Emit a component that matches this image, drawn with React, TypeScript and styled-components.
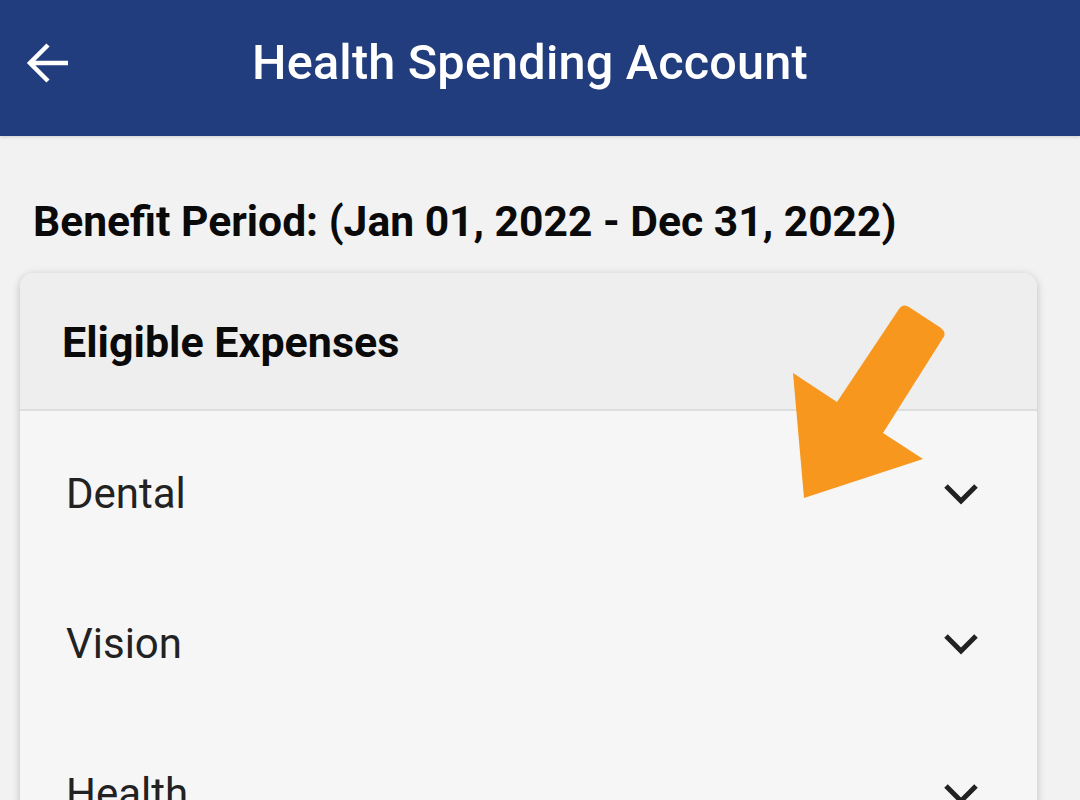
import React from "react";
import styled, { createGlobalStyle } from "styled-components";

const GlobalStyle = createGlobalStyle`
  html, body {
    margin: 0;
    padding: 0;
    background: #f2f2f2;
    overflow: hidden;
    font-family: Roboto, "Noto Sans", Arial, sans-serif;
  }
`;

const Page = styled.div`
  position: relative;
  width: 1080px;
  min-height: 800px;
`;

const TopBar = styled.header`
  height: 136px;
  background: #223d7d;
  display: flex;
  align-items: center;
  padding: 0 0 10px 24px;
  box-sizing: border-box;
  box-shadow: 0 1px 3px rgba(0, 0, 0, 0.15);
`;

const BackButton = styled.button`
  width: 48px;
  height: 48px;
  padding: 0;
  border: none;
  background: transparent;
  display: flex;
  align-items: center;
  justify-content: center;
  cursor: pointer;
`;

const Title = styled.h1`
  margin: 0 0 0 180px;
  color: #ffffff;
  font-size: 48.6px;
  font-weight: 500;
  line-height: 1.2;
  letter-spacing: 0.2px;
`;

const Content = styled.main`
  padding: 60px 20px 0 20px;
`;

const Period = styled.h2`
  margin: 0 0 26px 13px;
  font-size: 42.6px;
  font-weight: 700;
  line-height: 1.2;
  color: #0a0a0a;
`;

const Card = styled.section`
  width: 1017px;
  border-radius: 14px;
  background: #f6f6f6;
  box-shadow: 0 2px 8px rgba(0, 0, 0, 0.22);
  overflow: hidden;
`;

const CardHeader = styled.div`
  height: 138px;
  background: #eeeeee;
  border-bottom: 2px solid #dddddd;
  display: flex;
  align-items: center;
  padding: 4px 0 0 42px;
  box-sizing: border-box;
`;

const CardTitle = styled.h3`
  margin: 0;
  font-size: 43px;
  font-weight: 700;
  line-height: 1.2;
  color: #0a0a0a;
`;

const List = styled.ul`
  list-style: none;
  margin: 0;
  padding: 8px 0 0 0;
`;

const Row = styled.li`
  height: 150px;
  display: flex;
  align-items: center;
  justify-content: space-between;
  padding: 0 58px 0 46px;
`;

const RowLabel = styled.span`
  font-size: 42px;
  font-weight: 400;
  line-height: 1.2;
  color: #222222;
`;

const Pointer = styled.svg`
  position: absolute;
  left: 0;
  top: 0;
  pointer-events: none;
`;

const BackArrow = () => (
  <svg width="44" height="44" viewBox="0 0 44 44" fill="none">
    <path
      d="M42 22 H5 M22 4 L4 22 L22 40"
      stroke="#ffffff"
      strokeWidth="4.5"
      strokeLinecap="butt"
      strokeLinejoin="miter"
    />
  </svg>
);

const Chevron = () => (
  <svg width="36" height="24" viewBox="0 0 36 24" fill="none">
    <path d="M3 4 L18 19 L33 4" stroke="#222222" strokeWidth="5" strokeLinejoin="miter" />
  </svg>
);

const categories = ["Dental", "Vision", "Health"];

export default function App() {
  return (
    <Page>
      <GlobalStyle />
      <TopBar>
        <BackButton aria-label="Back">
          <BackArrow />
        </BackButton>
        <Title>Health Spending Account</Title>
      </TopBar>
      <Content>
        <Period>Benefit Period: (Jan 01, 2022 - Dec 31, 2022)</Period>
        <Card>
          <CardHeader>
            <CardTitle>Eligible Expenses</CardTitle>
          </CardHeader>
          <List>
            {categories.map((c) => (
              <Row key={c}>
                <RowLabel>{c}</RowLabel>
                <Chevron />
              </Row>
            ))}
          </List>
        </Card>
      </Content>
      <Pointer width="1080" height="800" viewBox="0 0 1080 800">
        <path
          d="M837 402 L899 309 Q903 303 909 307 L941 328 Q947 333 943 338 L883 433 L923 459 L804 498 L793 373 Z"
          fill="#f7971e"
        />
      </Pointer>
    </Page>
  );
}
